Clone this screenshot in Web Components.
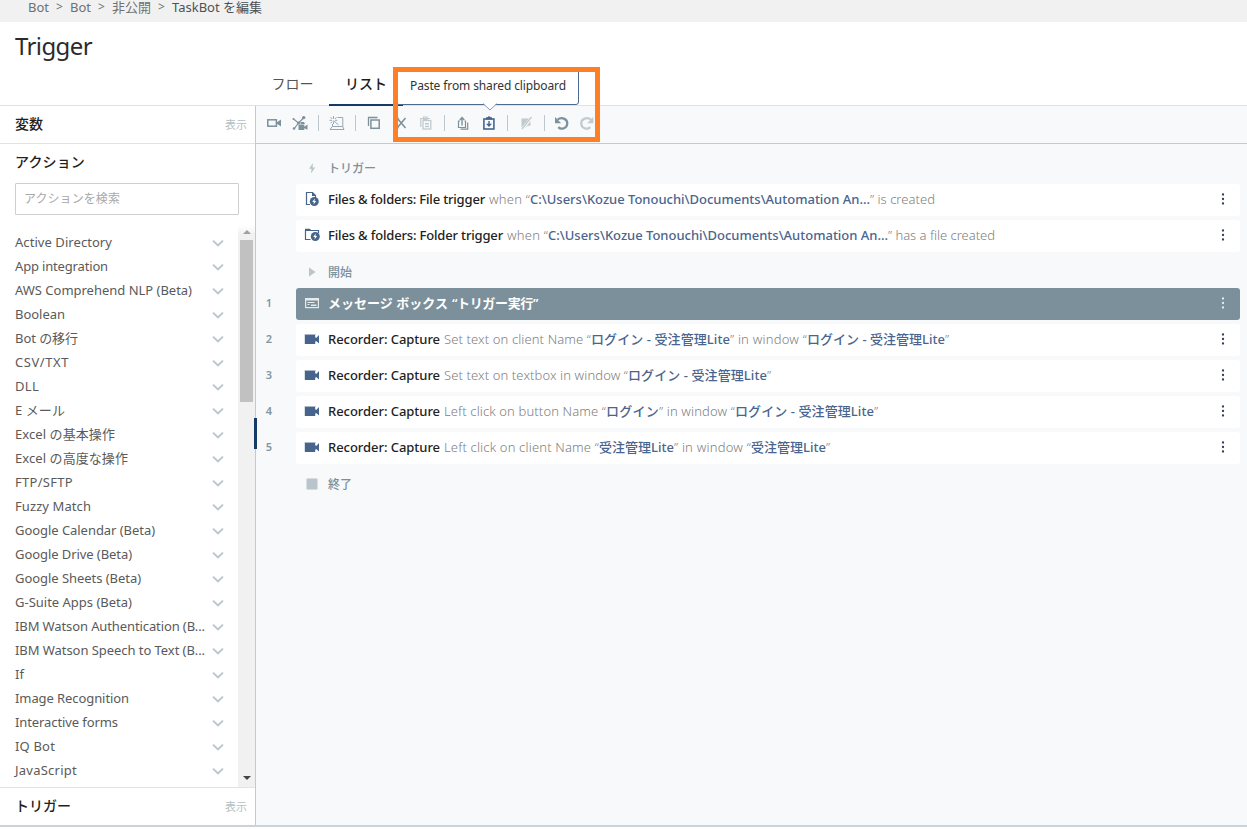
<!DOCTYPE html>
<html lang="ja">
<head>
<meta charset="utf-8">
<title>Trigger</title>
<style>
  body {
    margin: 0;
    width: 1247px;
    height: 829px;
    overflow: hidden;
    background: #fff;
    font-family: "Noto Sans", "Noto Sans CJK JP", sans-serif;
    font-size: 13px;
    line-height: 1;
    color: #555;
  }
</style>
</head>
<body>
<bot-editor></bot-editor>

<script>
const makeTemplate = (html) => {
  const template = document.createElement('template');
  template.innerHTML = html;
  return template;
};

class BaseElement extends HTMLElement {
  constructor() {
    super();
    this.attachShadow({ mode: 'open' });
    this.shadowRoot.appendChild(this.constructor.template.content.cloneNode(true));
  }
}

// icons, all drawn on a 16x16 grid
const ICONS = {
  camera: '<rect x="1.8" y="4.8" width="8.6" height="6.4" fill="none" stroke="currentColor" stroke-width="1.5"/><path d="M11 7.2L15 4.4v7.2l-4-2.8z" fill="currentColor"/>',
  recorder: '<path d="M.8 3.2h10.4v9.8H.8z" fill="currentColor"/><path d="M11 6.5l1.5.2L15 4v8.500l-2.500-2.300-1.500.2z" fill="currentColor"/><path d="M.8 3.500h10.400" stroke="#a9bacd"/>',
  webcam: '<path d="M1.500 4L6.500 8 11.500 3M2 14l4.500-6" fill="none" stroke="currentColor" stroke-width="1.200"/><circle cx="1.500" cy="4" r="1" fill="currentColor"/><circle cx="11.700" cy="2.600" r="1.700" fill="currentColor"/><circle cx="2" cy="13.500" r="1.300" fill="currentColor"/><circle cx="6.500" cy="8" r="1.500" fill="currentColor"/><path d="M6.500 9.500h5.800v5.500H6.500zM12 12l3.500-2.400v5.100L12 13zM8.500 7h3.500L13 9H8.500z" fill="currentColor"/>',
  wizard: '<path d="M8.500 2.500h5.300V11.500H3.500V9M3.300 11.500L1 14.500h14l-1.300-3" fill="none" stroke="currentColor"/><path d="M4.500 5.500L9.500 10M4.500 1v2.800M4.500 6.500v2.500M.5 5.300h2.500M6 5.300h2.300M1.600 2.200l1.700 1.800M7.500 2.200L5.800 4M1.600 8.200l1.700-1.600" stroke="currentColor" fill="none"/>',
  copy: '<path d="M2.500 11V2.500h9" fill="none" stroke="currentColor" stroke-width="1.300"/><rect x="4.900" y="5" width="8.300" height="8.300" fill="none" stroke="currentColor" stroke-width="1.500"/>',
  cut: '<path d="M4 3l8.500 10M12.500 3L4 13" stroke="currentColor" stroke-width="1.600"/><circle cx="3.500" cy="3.800" r="1.600" fill="none" stroke="currentColor" stroke-width="1.200"/><circle cx="3.500" cy="12.200" r="1.600" fill="none" stroke="currentColor" stroke-width="1.200"/>',
  paste: '<path d="M2.800 12V3.500h9M5.500 2h3.500v2.500H5.500z" fill="none" stroke="currentColor" stroke-width="1.200"/><rect x="5" y="5.500" width="7.800" height="8.500" fill="none" stroke="currentColor" stroke-width="1.300"/><path d="M7 8h4v1.400H7zM7 10.800h4v1.400H7z" fill="currentColor"/>',
  share: '<path d="M5 6H3.500v6.500h7V6H9.500M12.700 7.500v6.700H5.500" fill="none" stroke="currentColor" stroke-width="1.200"/><path d="M7 10.500V3M4.800 5L7 2.600 9.300 5" fill="none" stroke="currentColor" stroke-width="1.400"/>',
  clip: '<rect x="2.900" y="4" width="10" height="10" fill="none" stroke="currentColor" stroke-width="1.600"/><path d="M5 2.200h1.500L8 1l1.500 1.200H11v2.300H5zM7.300 6h1.400v2.800H11L8 12 5 8.800h2.300z" fill="currentColor"/>',
  mute: '<path d="M3.500 3.500H11L7 8.500 3.500 12.500zM12.500 6v4.500L9.500 11l-3 2.500 5-6z" fill="currentColor"/><path d="M13.500 2L4 14" stroke="currentColor" stroke-width="1.300"/>',
  undo: '<path d="M3.500 4.600C7.500 1.800 13.300 3.600 13.300 8.300c0 5-6 6.800-9 3.800" fill="none" stroke="currentColor" stroke-width="2.200"/><path d="M1 2v6.300h6.200z" fill="currentColor"/>',
  redo: '<path d="M12 4.600C8 1.800 2.200 3.600 2.200 8.300c0 5 6 6.800 9 3.800" fill="none" stroke="currentColor" stroke-width="2.200"/><path d="M14.300 2v6.300H8.200z" fill="currentColor"/>',
  file: '<path d="M6 13.500H2.500v-12h6l3 3V7" fill="none" stroke="currentColor" stroke-width="1.200"/><path d="M8 1l4 4H8z" fill="currentColor"/><circle cx="10.300" cy="10.500" r="4.500" fill="currentColor"/><path d="M10.800 7.500L8.200 11h1.700l-.4 2.600 2.700-3.700h-1.700z" fill="#fff"/>',
  folder: '<path d="M6.500 12.500h-5v-9h13V6" fill="none" stroke="currentColor" stroke-width="1.200"/><path d="M1 1.800h5L7.500 4H1z" fill="currentColor"/><circle cx="11.300" cy="9.500" r="4.500" fill="currentColor"/><path d="M11.800 6.500L9.200 10h1.700l-.4 2.600 2.700-3.700h-1.700z" fill="#fff"/>',
  message: '<rect x="1.600" y="3.600" width="12.800" height="9" fill="none" stroke="currentColor" stroke-width="1.200"/><path d="M2 4h12v1.500H2zM3.500 7h7v1h-7zM3.500 9h2v1h-2zM7 9.500h5.500v1.500H7z" fill="currentColor"/>',
  bolt: '<path d="M9 3L5 8.800h2.500L7 13.500l4.200-6H8.600z" fill="currentColor"/>',
  play: '<path d="M5 3.500v9L11.500 8z" fill="currentColor"/>',
  stop: '<path d="M2.500 2.500h11v11h-11z" fill="currentColor"/>',
  chevron: '<path d="M3 5.600l5 4.800 5-4.800" fill="none" stroke="currentColor" stroke-width="2"/>',
  more: '<circle cx="8" cy="3.500" r="1.150" fill="currentColor"/><circle cx="8" cy="8" r="1.150" fill="currentColor"/><circle cx="8" cy="12.500" r="1.150" fill="currentColor"/>'
};

class UiIcon extends HTMLElement {
  constructor() {
    super();
    this.attachShadow({ mode: 'open' });
  }
  connectedCallback() {
    this.shadowRoot.innerHTML = `
      <style>
        :host { display: block; flex: none; width: 16px; height: 16px; }
        svg { display: block; }
      </style>
      <svg width="16" height="16" viewBox="0 0 16 16">${ICONS[this.getAttribute('name')]}</svg>`;
  }
}

// a run of text tracked so that it fills the given width
class TextRun extends BaseElement {
  static template = makeTemplate('<style>:host { display: inline-block; white-space: pre; flex: none; }</style><slot></slot>');
  connectedCallback() {
    const target = Number(this.getAttribute('w'));
    const natural = this.getBoundingClientRect().width;
    if (!target || !natural) return;
    this.style.letterSpacing = (target - natural) / [...this.textContent].length + 'px';
    this.style.width = target + 'px';
  }
}

class BreadCrumbs extends BaseElement {
  static template = makeTemplate(`
    <style>
      :host {
        display: flex;
        align-items: center;
        height: 22px;
        padding: 0 28px 8px;
        box-sizing: border-box;
        background: #f1f1f1;
        color: #6c7174;
      }
      i { font-style: normal; font-size: 12px; width: 21px; text-align: center; }
      .last { color: #4e5254; }
    </style>
    <text-run w="21">Bot</text-run><i>&gt;</i>
    <text-run w="21">Bot</text-run><i>&gt;</i>
    <text-run w="39">非公開</text-run><i>&gt;</i>
    <text-run w="90" class="last">TaskBot を編集</text-run>`);
}

class PageHeader extends BaseElement {
  static template = makeTemplate(`
    <style>
      :host {
        display: flex;
        flex-direction: column;
        justify-content: space-between;
        height: 84px;
        box-sizing: border-box;
        border-bottom: 1px solid #dde2e6;
      }
      h1 { margin: 0; padding: 11px 0 0 15px; font-size: 24px; font-weight: 400; line-height: 26px; color: #2b2b2b; }
      nav { display: flex; padding-left: 256px; height: 42px; margin-bottom: -1px; }
      .tab { width: 73px; box-sizing: border-box; padding-bottom: 3px; display: flex; justify-content: center; align-items: center; font-size: 14px; }
      .active { width: 74px; padding-bottom: 1px; font-weight: 500; color: #1c1c1c; border-bottom: 2px solid #143a68; }
    </style>
    <h1><text-run w="77">Trigger</text-run></h1>
    <nav>
      <div class="tab"><text-run w="42">フロー</text-run></div>
      <div class="tab active"><text-run w="42">リスト</text-run></div>
    </nav>`);
}

class PanelHead extends BaseElement {
  static template = makeTemplate(`
    <style>
      :host {
        display: flex;
        align-items: center;
        justify-content: space-between;
        padding: 0 8px 1px 15px;
        height: 37px;
        flex: none;
        box-sizing: border-box;
        font-size: 14px;
        font-weight: 500;
        color: #1f1f1f;
      }
      ::slotted([slot="link"]) { font-size: 11px; font-weight: 400; color: #b4bfc4; }
    </style>
    <slot></slot>
    <slot name="link"></slot>`);
}

const ACTIONS = [
  ['Active Directory', 97], ['App integration', 93], ['AWS Comprehend NLP (Beta)', 177],
  ['Boolean', 50], ['Bot の移行', 63], ['CSV/TXT', 54], ['DLL', 24], ['E メール', 50],
  ['Excel の基本操作', 100], ['Excel の高度な操作', 113], ['FTP/SFTP', 58], ['Fuzzy Match', 76],
  ['Google Calendar (Beta)', 140], ['Google Drive (Beta)', 117], ['Google Sheets (Beta)', 126],
  ['G-Suite Apps (Beta)', 117], ['IBM Watson Authentication (B...', 190],
  ['IBM Watson Speech to Text (B...', 190], ['If', 9], ['Image Recognition', 114],
  ['Interactive forms', 103], ['IQ Bot', 40], ['JavaScript', 62]
];

class ActionList extends BaseElement {
  static template = makeTemplate(`
    <style>
      :host { display: flex; flex: 1; min-height: 0; overflow: hidden; }
      ul { list-style: none; margin: 0; padding: 5px 12px 0 15px; flex: 1; }
      li { height: 24px; display: flex; align-items: center; justify-content: space-between; color: #5a5a5a; }
      ui-icon { color: #bac7cd; margin-top: 1px; }
      .scroll {
        width: 17px;
        box-sizing: border-box;
        display: flex;
        flex-direction: column;
        align-items: center;
        background: linear-gradient(#fff, #f1f1f1 10px);
        padding: 0 2px;
      }
      .up, .down { border: 4px solid transparent; width: 0; height: 0; }
      .up { border-top: 0; border-bottom-color: #a0a0a0; margin-top: 5px; }
      .down { border-bottom: 0; border-top-color: #444; margin: auto 0 7px; }
      .thumb { width: 13px; height: 162px; background: #c1c1c1; margin-top: 6px; }
    </style>
    <ul>${ACTIONS.map(([text, w]) => `<li><text-run w="${w}">${text}</text-run><ui-icon name="chevron"></ui-icon></li>`).join('')}</ul>
    <div class="scroll"><div class="up"></div><div class="thumb"></div><div class="down"></div></div>`);
}

class SideBar extends BaseElement {
  static template = makeTemplate(`
    <style>
      :host {
        display: flex;
        flex-direction: column;
        width: 256px;
        box-sizing: border-box;
        border-right: 1px solid #b8cdd9;
        background: #fff;
      }
      .line { border-bottom: 1px solid #dfe3e5; height: 38px; }
      .foot { border-top: 1px solid #dfe3e5; height: 38px; }
      .search {
        margin: 2px 16px 10px 15px;
        height: 32px;
        flex: none;
        box-sizing: border-box;
        border: 1px solid #cfcfcf;
        border-radius: 1px;
        display: flex;
        align-items: center;
        padding: 0 8px;
        color: #a9a9a9;
        font-size: 12px;
      }
    </style>
    <panel-head class="line"><text-run w="28">変数</text-run><text-run slot="link" w="22">表示</text-run></panel-head>
    <panel-head><text-run w="70">アクション</text-run></panel-head>
    <div class="search"><text-run w="96">アクションを検索</text-run></div>
    <action-list></action-list>
    <panel-head class="foot"><text-run w="56">トリガー</text-run><text-run slot="link" w="22">表示</text-run></panel-head>`);
}

class ToolTip extends BaseElement {
  static template = makeTemplate(`
    <style>
      :host {
        position: absolute;
        right: -82px;
        bottom: 26px;
        width: 183px;
        height: 38px;
        box-sizing: border-box;
        border: 1px solid #4d6a91;
        border-radius: 3px;
        background: #fff;
        color: #333;
        font-size: 12px;
        display: flex;
        align-items: center;
        justify-content: center;
        padding-left: 1px;
      }
      svg { position: absolute; left: 86px; bottom: -7px; }
    </style>
    <slot></slot>
    <svg width="14" height="8"><path d="M0 0L7 7 14 0z" fill="#fff"/><path d="M0 .5L7 7 14 .5" fill="none" stroke="#8b9db8"/></svg>`);
}

class ToolBar extends BaseElement {
  static template = makeTemplate(`
    <style>
      :host {
        display: flex;
        align-items: center;
        height: 38px;
        flex: none;
        box-sizing: border-box;
        padding: 0 0 3px 10px;
        border-bottom: 1px solid #b6cedc;
        color: #7d919b;
      }
      hr { border: 0; width: 1px; height: 16px; margin: 0 10px; background: #bcc8ce; }
      hr.tight { margin-right: 9px; }
      .gap { margin-left: 10px; }
      .gap-s { margin-left: 9px; }
      .gap-l { margin-left: 11px; }
      .off { color: #c1cacf; }
      .pale { color: #98a8b0; }
      .anchor { position: relative; color: #46658c; }
    </style>
    <ui-icon name="camera"></ui-icon>
    <ui-icon name="webcam" class="gap"></ui-icon>
    <hr><ui-icon name="wizard" class="pale"></ui-icon>
    <hr><ui-icon name="copy"></ui-icon>
    <ui-icon name="cut" class="gap-l"></ui-icon>
    <ui-icon name="paste" class="gap-s off"></ui-icon>
    <hr><ui-icon name="share"></ui-icon>
    <div class="anchor gap">
      <ui-icon name="clip"></ui-icon>
      <tool-tip><text-run w="156">Paste from shared clipboard</text-run></tool-tip>
    </div>
    <hr><ui-icon name="mute" class="off"></ui-icon>
    <hr class="tight"><ui-icon name="undo"></ui-icon>
    <ui-icon name="redo" class="gap-s off"></ui-icon>`);
}

class SectionLabel extends BaseElement {
  static template = makeTemplate(`
    <style>
      :host {
        display: flex;
        align-items: center;
        gap: 8px;
        height: 32px;
        padding-left: 48px;
        font-size: 12px;
        font-weight: 500;
        color: #7b909b;
      }
      ::slotted(ui-icon) { color: #b9c5ca; }
      ::slotted(text-run) { padding-top: 2px; }
    </style>
    <slot></slot>`);
}

class CommandRow extends BaseElement {
  static observedAttributes = ['num'];
  static template = makeTemplate(`
    <style>
      :host { display: flex; align-items: center; height: 32px; margin-bottom: 4px; }
      .num { width: 26px; margin-right: 14px; padding-bottom: 3px; text-align: center; font-size: 11px; font-weight: 600; color: #8296a0; }
      .card {
        flex: 1;
        height: 32px;
        margin-right: 7px;
        padding: 0 9px 2px 8px;
        box-sizing: border-box;
        border-radius: 3px;
        background: #fff;
        display: flex;
        align-items: center;
        color: #46648c;
      }
      .text { display: flex; align-items: center; flex: 1; margin-left: 8px; }
      .more { color: #333c55; }
      ::slotted(text-run) { font-weight: 300; color: #808080; }
      ::slotted(.name) { font-weight: 500; color: #222; margin-right: 4px; }
      ::slotted(.value) { font-weight: 500; color: #4a658d; }
      :host([selected]) .card, :host([selected]) .more { color: #e6ebed; }
      :host([selected]) .card { background: #7b909b; }
      :host([selected]) ::slotted(text-run) { color: #fff; font-weight: 600; }
    </style>
    <div class="num"></div>
    <div class="card">
      <slot name="icon"></slot>
      <div class="text"><slot></slot></div>
      <ui-icon name="more" class="more"></ui-icon>
    </div>`);
  attributeChangedCallback(name, old, value) {
    this.shadowRoot.querySelector('.num').innerText = value;
  }
}

class CommandList extends BaseElement {
  static template = makeTemplate(`
    <style>
      :host { display: block; flex: 1; padding-top: 8px; }
    </style>
    <section-label><ui-icon name="bolt"></ui-icon><text-run w="48">トリガー</text-run></section-label>
    <command-row>
      <ui-icon slot="icon" name="file"></ui-icon>
      <text-run class="name" w="157">Files &amp; folders: File trigger</text-run><text-run w="41">when “</text-run><text-run class="value" w="340">C:\\Users\\Kozue Tonouchi\\Documents\\Automation An...</text-run><text-run w="65">” is created</text-run>
    </command-row>
    <command-row>
      <ui-icon slot="icon" name="folder"></ui-icon>
      <text-run class="name" w="175">Files &amp; folders: Folder trigger</text-run><text-run w="41">when “</text-run><text-run class="value" w="340">C:\\Users\\Kozue Tonouchi\\Documents\\Automation An...</text-run><text-run w="107">” has a file created</text-run>
    </command-row>
    <section-label><ui-icon name="play"></ui-icon><text-run w="24">開始</text-run></section-label>
    <command-row num="1" selected>
      <ui-icon slot="icon" name="message"></ui-icon>
      <text-run class="name" w="120">メッセージ ボックス</text-run><text-run w="86">“トリガー実行”</text-run>
    </command-row>
    <command-row num="2">
      <ui-icon slot="icon" name="recorder"></ui-icon>
      <text-run class="name" w="112">Recorder: Capture</text-run><text-run w="147">Set text on client Name “</text-run><text-run class="value" w="139">ログイン - 受注管理Lite</text-run><text-run w="77">” in window “</text-run><text-run class="value" w="138">ログイン - 受注管理Lite</text-run><text-run w="5">”</text-run>
    </command-row>
    <command-row num="3">
      <ui-icon slot="icon" name="recorder"></ui-icon>
      <text-run class="name" w="112">Recorder: Capture</text-run><text-run w="184">Set text on textbox in window “</text-run><text-run class="value" w="139">ログイン - 受注管理Lite</text-run><text-run w="5">”</text-run>
    </command-row>
    <command-row num="4">
      <ui-icon slot="icon" name="recorder"></ui-icon>
      <text-run class="name" w="112">Recorder: Capture</text-run><text-run w="162">Left click on button Name “</text-run><text-run class="value" w="53">ログイン</text-run><text-run w="76">” in window “</text-run><text-run class="value" w="139">ログイン - 受注管理Lite</text-run><text-run w="5">”</text-run>
    </command-row>
    <command-row num="5">
      <ui-icon slot="icon" name="recorder"></ui-icon>
      <text-run class="name" w="112">Recorder: Capture</text-run><text-run w="155">Left click on client Name “</text-run><text-run class="value" w="75">受注管理Lite</text-run><text-run w="77">” in window “</text-run><text-run class="value" w="75">受注管理Lite</text-run><text-run w="5">”</text-run>
    </command-row>
    <section-label><ui-icon name="stop"></ui-icon><text-run w="24">終了</text-run></section-label>`);
}

class BotEditor extends BaseElement {
  static template = makeTemplate(`
    <style>
      :host { display: flex; flex-direction: column; height: 829px; position: relative; }
      .body {
        display: flex;
        height: 721px;
        box-sizing: border-box;
        border-bottom: 2px solid #c9d3d9;
      }
      main { flex: 1; display: flex; flex-direction: column; background: #f8f9fb; }
      .handle { position: absolute; left: 254px; top: 418px; width: 3px; height: 31px; background: #143a68; }
      .mark { position: absolute; left: 393px; top: 67px; width: 207px; height: 75px; box-sizing: border-box; border: 5px solid #ff7f27; }
    </style>
    <bread-crumbs></bread-crumbs>
    <page-header></page-header>
    <div class="body">
      <side-bar></side-bar>
      <main>
        <tool-bar></tool-bar>
        <command-list></command-list>
      </main>
    </div>
    <div class="handle"></div>
    <div class="mark"></div>`);
}

window.customElements.define('bot-editor', BotEditor);
window.customElements.define('bread-crumbs', BreadCrumbs);
window.customElements.define('page-header', PageHeader);
window.customElements.define('side-bar', SideBar);
window.customElements.define('panel-head', PanelHead);
window.customElements.define('action-list', ActionList);
window.customElements.define('tool-bar', ToolBar);
window.customElements.define('tool-tip', ToolTip);
window.customElements.define('command-list', CommandList);
window.customElements.define('section-label', SectionLabel);
window.customElements.define('command-row', CommandRow);
window.customElements.define('ui-icon', UiIcon);
// last, so every run is measured in its final styles
window.customElements.define('text-run', TextRun);
</script>
</body>
</html>
